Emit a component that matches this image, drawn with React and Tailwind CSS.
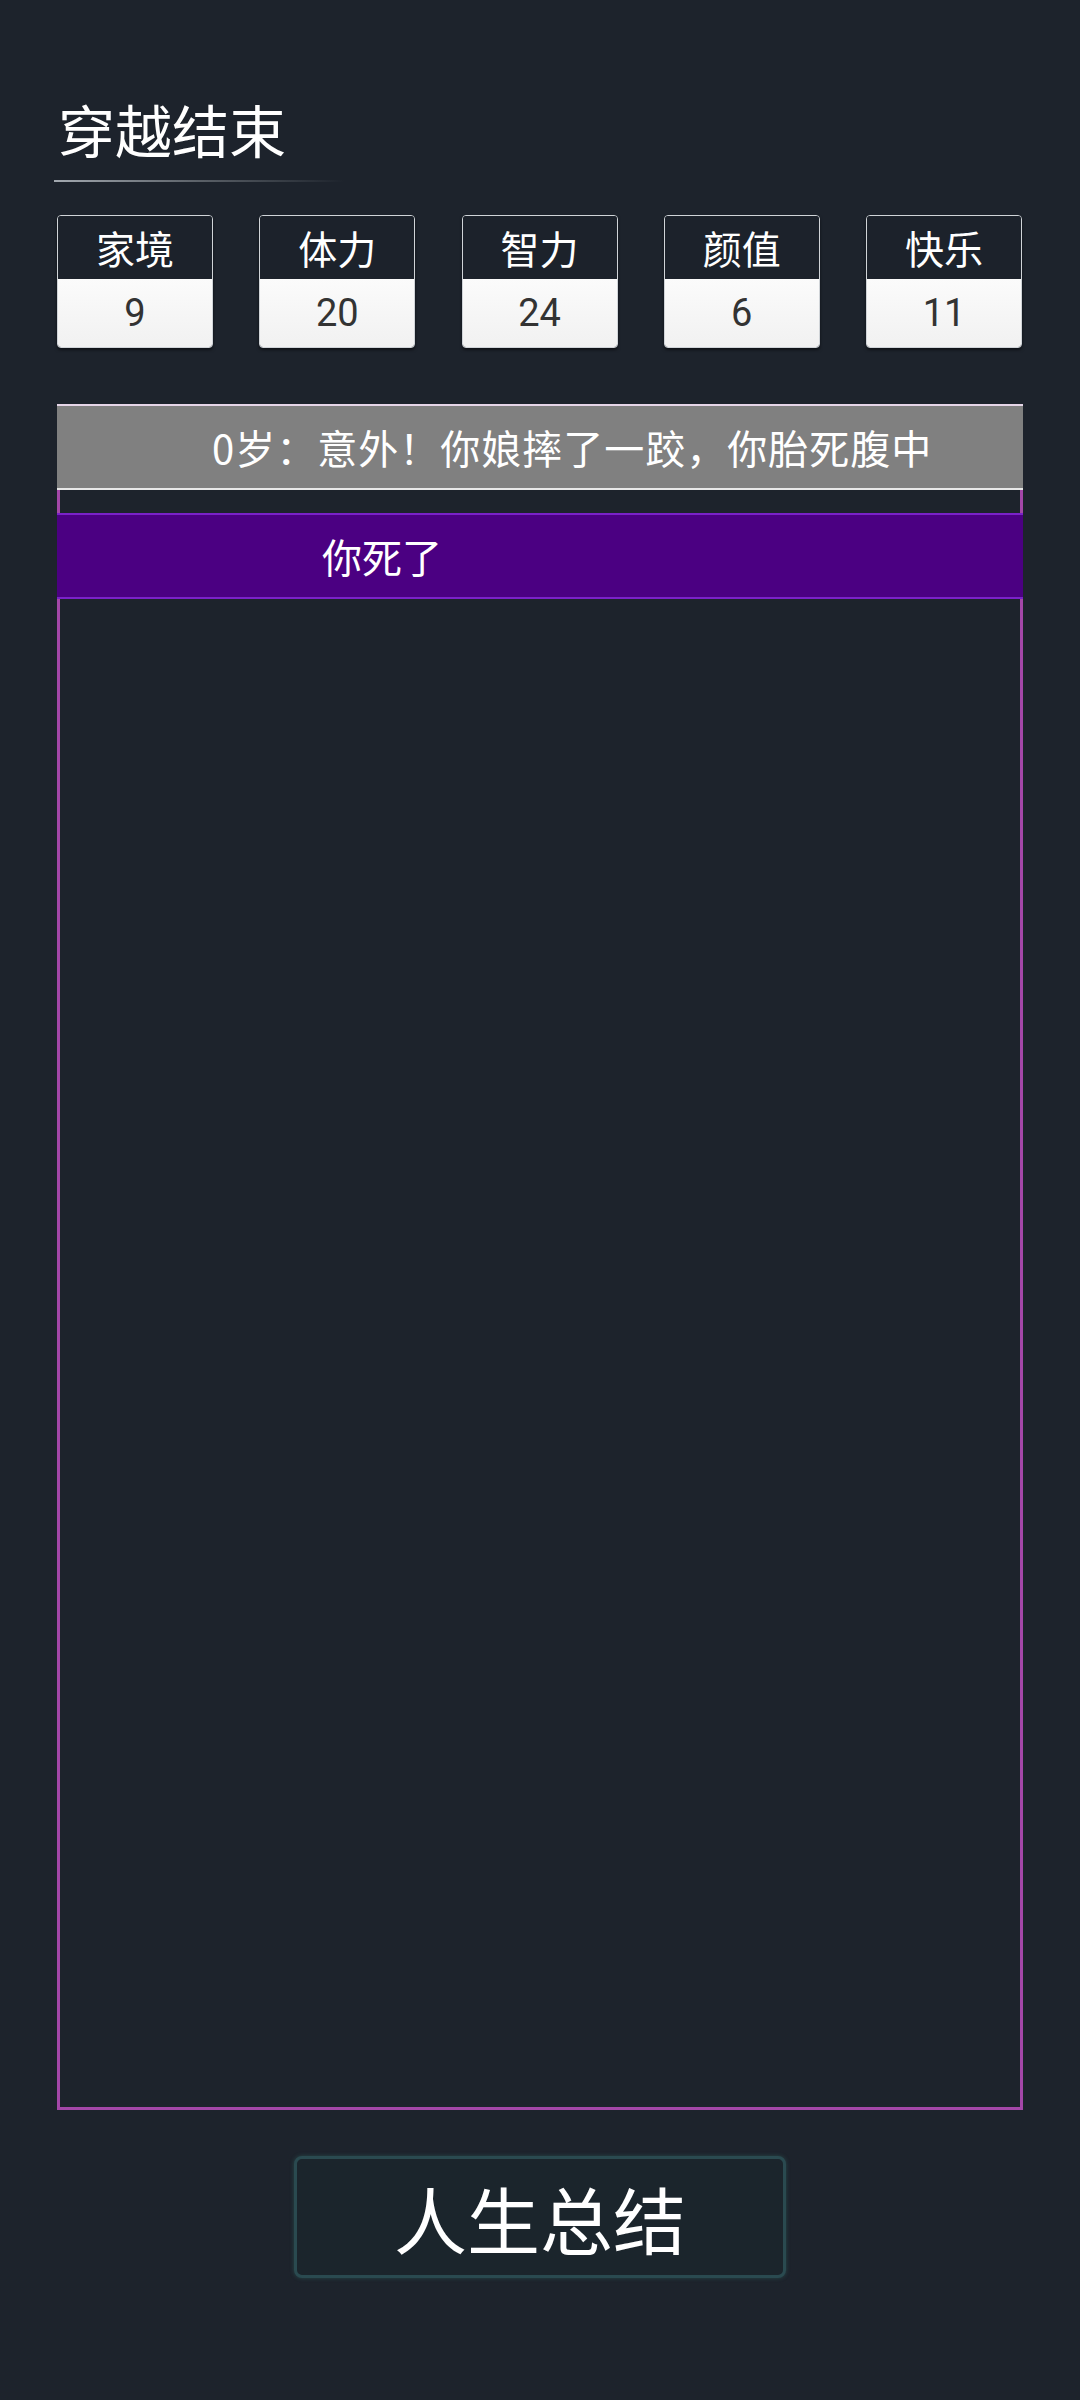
import React from 'react';

const stats = [
  { label: '家境', value: 9 },
  { label: '体力', value: 20 },
  { label: '智力', value: 24 },
  { label: '颜值', value: 6 },
  { label: '快乐', value: 11 },
];

const font = { fontFamily: '"Noto Sans CJK SC", "Noto Sans", sans-serif' };

const StatBox = ({ label, value }) => (
  <div className="w-[156px] h-[133px] flex flex-col rounded-[4px] border border-[#d0d4d8] overflow-hidden shadow-[0_2px_3px_rgba(0,0,0,0.5)]">
    <div className="h-[63px] bg-[#1c222b] flex items-center justify-center text-white text-[39px] leading-none">
      {label}
    </div>
    <div
      className="flex-1 bg-gradient-to-b from-[#fbfbfb] to-[#f1f1f1] flex items-center justify-center text-[#333] text-[38px] leading-none"
      style={{ fontFamily: 'Roboto, "Noto Sans", sans-serif' }}
    >
      {value}
    </div>
  </div>
);

export default function App() {
  return (
    <div className="min-h-[2400px] w-[1080px] bg-[#1d232c] text-white" style={font}>
      <div className="px-[57px] pt-[100px]">
        <h1 className="text-[57px] leading-none font-normal pl-[1px]">穿越结束</h1>
        <div className="mt-[23px] -ml-[3px] h-[2px] w-[290px] bg-gradient-to-r from-[#a3a9b0] via-[#5b6168] to-transparent" />

        <div className="mt-[33px] flex justify-between pr-[1px]">
          {stats.map((s) => (
            <StatBox key={s.label} {...s} />
          ))}
        </div>

        <div className="mt-[56px]">
          <div className="h-[86px] bg-[#808080] border-t-2 border-t-[#e6d6e8] border-b-2 border-b-[#e8e8e8] flex items-center pl-[155px] text-[40px] tracking-[1px] leading-none whitespace-nowrap">
            0岁：意外！你娘摔了一跤，你胎死腹中
          </div>
          <div className="h-[1620px] border-[3px] border-t-0 border-[#a447a8] pt-[23px]">
            <div className="-mx-[3px] h-[86px] bg-[#4b0082] border-y-2 border-[#7a22c8] flex items-center pl-[265px] text-[40px] leading-none">
              你死了
            </div>
          </div>
        </div>

        <div className="mt-[46px] flex justify-center">
          <button className="w-[492px] h-[122px] rounded-[8px] border-[3px] border-[#2a4a50] bg-[#1b252c] shadow-[0_0_4px_rgba(60,140,130,0.35)] flex items-center justify-center text-white text-[73px] leading-none" style={font}>
            人生总结
          </button>
        </div>
      </div>
    </div>
  );
}
